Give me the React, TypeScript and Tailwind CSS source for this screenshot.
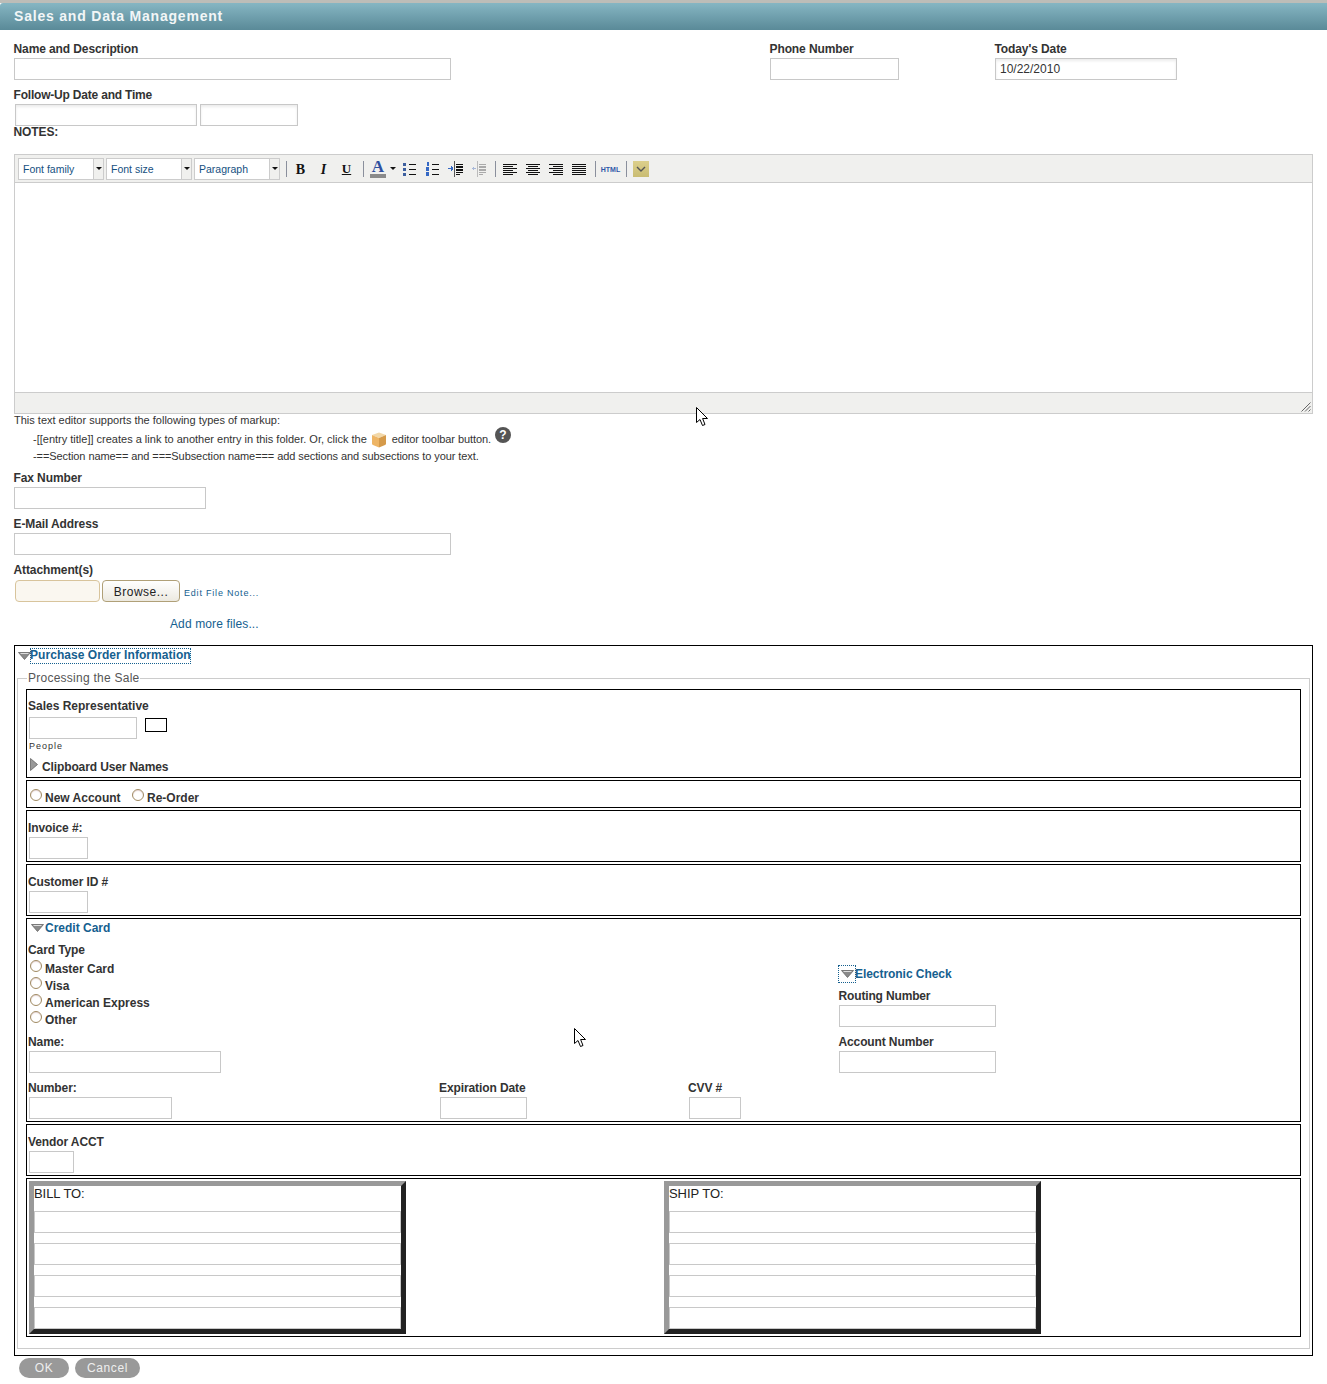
import React from "react";

const Label = ({ children, className = "" }: { children: React.ReactNode; className?: string }) => (
  <div className={`h-[16px] leading-[16px] text-[12px] font-bold text-[#333] whitespace-nowrap tracking-[-0.1px] ${className}`}>{children}</div>
);

const Input = ({ className = "", value }: { className?: string; value?: string }) => (
  <input
    readOnly
    value={value ?? ""}
    className={`block h-[22px] border border-[#c8c8c8] bg-white px-[4px] text-[12px] text-[#333] outline-none ${className}`}
  />
);

const Box = ({ children, className = "" }: { children: React.ReactNode; className?: string }) => (
  <div className={`border border-black pl-[1px] ${className}`}>{children}</div>
);

const Radio = ({ label, className = "" }: { label: string; className?: string }) => (
  <div className={`flex items-start h-[17px] ${className}`}>
    <span className="block ml-[2px] -mt-[1px] w-[12px] h-[12px] rounded-full border border-[#a08a62] bg-white shadow-[inset_0_1px_1px_rgba(180,130,130,0.35)] shrink-0" />
    <span className="ml-[3px] leading-[16px] text-[12px] font-bold text-[#333] whitespace-nowrap">{label}</span>
  </div>
);

const Down = ({ className = "" }: { className?: string }) => (
  <svg width="13" height="8" viewBox="0 0 13 8" className={`block shrink-0 ${className}`}>
    <path d="M0.5 0.5H12.5L6.5 7.5Z" fill="#8a8a8a" stroke="#666" strokeWidth="0.8" />
    <path d="M2.5 1.5H10.5" stroke="#ddd" strokeWidth="1" />
  </svg>
);

type R = [number, number, number, number?, string?];
const Bars = ({ rects }: { rects: R[] }) => (
  <svg width="16" height="16" viewBox="0 0 16 16" className="block">
    {rects.map((r, i) => (
      <rect key={i} x={r[0]} y={r[1]} width={r[2]} height={r[3] ?? 1} fill={r[4] ?? "#111"} />
    ))}
  </svg>
);

const Btn = ({ children, className = "" }: { children: React.ReactNode; className?: string }) => (
  <div className={`w-[23px] h-[20px] flex items-center justify-center shrink-0 ${className}`}>{children}</div>
);

const Sep = ({ className = "" }: { className?: string }) => (
  <div className={`w-[1px] h-[16px] bg-[#8a8f9c] shrink-0 ${className}`} />
);

const Select = ({ label }: { label: string }) => (
  <div className="w-[86px] h-[22px] flex border border-[#ccc] shrink-0 mr-[2px]">
    <div className="w-[75px] bg-white border-r border-[#ccc] pl-[4px] leading-[20px] text-[10.5px] text-[#15507f] whitespace-nowrap">{label}</div>
    <div className="flex-1 bg-[#f0f0ee] flex items-center justify-center">
      <div className="w-0 h-0 border-l-[3px] border-r-[3px] border-t-[3px] border-l-transparent border-r-transparent border-t-[#111]" />
    </div>
  </div>
);

const Cursor = ({ className = "" }: { className?: string }) => (
  <svg width="13" height="20" viewBox="0 0 13 20" className={`absolute ${className}`}>
    <path d="M0.5 0.5V15.5L4 12.5L6.5 18.5L9 17.5L6.6 11.5H11.5Z" fill="#fff" stroke="#000" strokeWidth="1" />
  </svg>
);

const align = {
  left: [[1, 3, 14], [1, 5, 10], [1, 7, 14], [1, 9, 10], [1, 11, 14], [1, 13, 10]] as R[],
  center: [[1, 3, 14], [3, 5, 10], [1, 7, 14], [3, 9, 10], [1, 11, 14], [3, 13, 10]] as R[],
  right: [[1, 3, 14], [5, 5, 10], [1, 7, 14], [5, 9, 10], [1, 11, 14], [5, 13, 10]] as R[],
  full: [[1, 3, 14], [1, 5, 14], [1, 7, 14], [1, 9, 14], [1, 11, 14], [1, 13, 14]] as R[],
};

const Address = ({ title }: { title: string }) => (
  <div className="w-[377px] h-[153px] border-[5px] border-t-[#999] border-l-[#999] border-r-[#222] border-b-[#222]">
    <div className="h-[25px] leading-[15px] text-[13px] tracking-[-0.05px] text-[#222]">{title}</div>
    <Input className="w-full" />
    <Input className="w-full mt-[10px]" />
    <Input className="w-full mt-[10px]" />
    <Input className="w-full mt-[10px]" />
  </div>
);

export default function App() {
  return (
    <div className="relative w-[1327px] h-[1384px] bg-white overflow-hidden font-['Liberation_Sans',Arial,sans-serif]">
      <div className="h-[3px] bg-[#bdbdb8]" />
      <div className="h-[27px] rounded-tl-[3px] bg-gradient-to-b from-[#86b6c3] to-[#5a8a98] pl-[14px] leading-[26px] text-[14px] font-bold tracking-[0.8px] text-[#f2f6f7]">
        Sales and Data Management
      </div>

      <div className="pl-[14px] w-[1313px]">
        <div className="flex pt-[11px]">
          <div className="w-[756px]">
            <Label className="-ml-[0.5px]">Name and Description</Label>
            <Input className="w-[437px] mt-[1px]" />
          </div>
          <div className="w-[225px]">
            <Label className="-ml-[0.5px]">Phone Number</Label>
            <Input className="w-[129px] mt-[1px]" />
          </div>
          <div>
            <Label className="-ml-[0.5px]">Today's Date</Label>
            <Input className="w-[182px] mt-[1px] shadow-[inset_0_2px_3px_rgba(0,0,0,0.08)] border-[#bbb]" value="10/22/2010" />
          </div>
        </div>

        <Label className="-ml-[0.5px] mt-[7px] tracking-[-0.2px]">Follow-Up Date and Time</Label>
        <div className="flex gap-[3px] mt-[1px] ml-[1px]">
          <Input className="w-[182px] border-[#bbb] shadow-[inset_0_2px_3px_rgba(0,0,0,0.08)]" />
          <Input className="w-[98px] border-[#bbb] shadow-[inset_0_2px_3px_rgba(0,0,0,0.08)]" />
        </div>
        <Label className="-ml-[0.5px] -mt-[2px]">NOTES:</Label>

        {/* editor */}
        <div className="mt-[14px] h-[260px] border border-[#ccc] flex flex-col">
          <div className="h-[28px] bg-[#f0f0ee] border-b border-[#ccc] flex items-center pl-[3px] shrink-0">
            <Select label="Font family" />
            <Select label="Font size" />
            <Select label="Paragraph" />
            <Sep className="ml-[4px]" />
            <Btn className="ml-[2px] pt-[2px] font-['Liberation_Serif',serif] font-bold text-[14px] text-[#111]">B</Btn>
            <Btn className="pt-[2px] font-['Liberation_Serif',serif] font-bold italic text-[14px] text-[#111]">I</Btn>
            <Btn className="pt-[1px] font-['Liberation_Serif',serif] font-bold underline text-[13px] text-[#111]">U</Btn>
            <Sep className="ml-[5px]" />
            <div className="ml-[3px] w-[22px] h-[20px] relative shrink-0 flex flex-col items-center">
              <span className="leading-[15px] text-[17px] font-bold font-['Liberation_Serif',serif] text-[#2f4f9f]">A</span>
              <span className="block w-[16px] h-[4px] bg-[#8a8a8a]" />
            </div>
            <div className="w-[8px] flex justify-center shrink-0">
              <div className="w-0 h-0 border-l-[3px] border-r-[3px] border-t-[3px] border-l-transparent border-r-transparent border-t-[#111]" />
            </div>
            <Btn className="ml-[1px]">
              <Bars rects={[[1, 2, 3, 3, "#3d5f9f"], [7, 3, 7], [1, 7, 3, 3, "#3d5f9f"], [7, 8, 7], [1, 12, 3, 3, "#3d5f9f"], [7, 13, 7]]} />
            </Btn>
            <Btn>
              <Bars rects={[[2, 1, 2, 4, "#3568c4"], [7, 3, 7], [1, 6, 3, 4, "#3568c4"], [7, 8, 7], [1, 11, 3, 4, "#3568c4"], [7, 13, 7]]} />
            </Btn>
            <Btn>
              <Bars rects={[[6, 0, 1, 16, "#555"], [8, 3, 7, 1], [8, 5, 7, 2], [8, 8, 7, 2], [8, 11, 7, 1], [0, 7, 3, 1, "#3568c4"], [3, 5, 1, 5, "#3568c4"], [4, 6, 1, 3, "#3568c4"], [8, 13, 4, 1]]} />
            </Btn>
            <Btn>
              <Bars rects={[[6, 0, 1, 16, "#bbb"], [8, 3, 7, 1, "#aaa"], [8, 5, 7, 2, "#aaa"], [8, 8, 7, 2, "#aaa"], [8, 11, 7, 1, "#aaa"], [1, 7, 4, 1, "#a8b8d8"], [2, 6, 1, 3, "#a8b8d8"], [8, 13, 4, 1, "#aaa"]]} />
            </Btn>
            <Sep className="ml-[5px]" />
            <Btn className="ml-[2px]"><Bars rects={align.left} /></Btn>
            <Btn><Bars rects={align.center} /></Btn>
            <Btn><Bars rects={align.right} /></Btn>
            <Btn><Bars rects={align.full} /></Btn>
            <Sep className="ml-[5px]" />
            <Btn className="ml-[3px] pt-[3px] text-[7px] font-bold text-[#2f57a8]">HTML</Btn>
            <Sep className="ml-[4px]" />
            <div className="ml-[6px] w-[16px] h-[16px] bg-gradient-to-b from-[#dccf8c] to-[#c9bc72] flex items-center justify-center shrink-0">
              <svg width="10" height="6" viewBox="0 0 10 6" className="block">
                <path d="M1 1L5 5L9 1" fill="none" stroke="#555" strokeWidth="1.4" />
              </svg>
            </div>
          </div>
          <div className="flex-1 bg-white" />
          <div className="h-[21px] shrink-0 bg-[#f0f0ee] border-t border-[#ccc] flex justify-end items-end pr-[1px] pb-[1px]">
            <svg width="10" height="10" viewBox="0 0 10 10" className="block">
              <path d="M9.5 0.5L0.5 9.5M9.5 4L4 9.5M9.5 7.5L7.5 9.5" stroke="#666" strokeWidth="1" fill="none" />
            </svg>
          </div>
        </div>

        {/* help */}
        <div className="h-[14px] leading-[13px] text-[11px] text-[#333] whitespace-nowrap">This text editor supports the following types of markup:</div>
        <div className="mt-[1px] pl-[19px] h-[20px] flex items-start text-[11px] text-[#333] whitespace-nowrap">
          <span className="mt-[3px] leading-[14px]">-[[entry title]] creates a link to another entry in this folder. Or, click the</span>
          <svg width="16" height="16" viewBox="0 0 16 16" className="block ml-[4px] mt-[3px] shrink-0">
            <path d="M8 0.5L15 3L8 6L1 3Z" fill="#f2d8a8" />
            <path d="M1 3L8 6V15.5L2 13Q1 12.5 1 11.5Z" fill="#eeb565" />
            <path d="M15 3L8 6V15.5L14 13Q15 12.5 15 11.5Z" fill="#d59a4a" />
          </svg>
          <span className="ml-[5px] mt-[3px] leading-[14px] tracking-[-0.08px]">editor toolbar button.</span>
          <span className="ml-[4px] -mt-[2px] w-[16px] h-[16px] rounded-full bg-[#555] text-white text-[12px] font-bold leading-[16px] text-center shrink-0">?</span>
        </div>
        <div className="pl-[19px] h-[14px] leading-[14px] text-[11px] tracking-[-0.08px] text-[#333] whitespace-nowrap">-==Section name== and ===Subsection name=== add sections and subsections to your text.</div>

        <Label className="-ml-[0.5px] mt-[7px]">Fax Number</Label>
        <Input className="w-[192px] mt-[1px]" />
        <Label className="-ml-[0.5px] mt-[7px]">E-Mail Address</Label>
        <Input className="w-[437px] mt-[1px]" />
        <Label className="-ml-[0.5px] mt-[7px]">Attachment(s)</Label>

        <div className="mt-[2px] ml-[1px] flex items-start h-[22px]">
          <div className="w-[85px] h-[22px] rounded-[4px] border border-[#d8c49c] bg-[#faf7f0]" />
          <button className="ml-[2px] w-[78px] h-[22px] pt-[2px] rounded-[4px] border border-[#b0a078] bg-gradient-to-b from-[#fff] to-[#ece9e0] text-[12px] tracking-[0.5px] text-[#222]">Browse...</button>
          <a className="ml-[4px] mt-[7px] leading-[12px] text-[9px] tracking-[0.8px] text-[#15608f]">Edit File Note...</a>
        </div>
        <div className="mt-[14px] pl-[156px] h-[15px] leading-[16px] text-[12px] tracking-[0.12px] text-[#15608f]">Add more files...</div>

        {/* purchase */}
        <div className="mt-[14px] h-[711px] border border-black">
          <div className="flex items-center h-[17px] mt-[1px] pl-[3px]">
            <Down className="mt-[1px]" />
            <span className="-ml-[1px] outline outline-1 outline-dotted outline-[#15608f] -outline-offset-1 h-[16px] leading-[15px] text-[12px] font-bold tracking-[0.05px] text-[#15608f] whitespace-nowrap">Purchase Order Information</span>
          </div>
          <fieldset className="mx-[2px] mt-[6px] px-[8px] pb-[11px] border border-[#ccc]">
            <legend className="ml-[1px] px-[1px] h-[16px] leading-[16px] text-[12px] tracking-[0.25px] text-[#555]">Processing the Sale</legend>
            <div className="flex flex-col gap-[2px] pt-[3px]">
              <Box className="h-[89px] pt-[8px]">
                <Label className="tracking-[0px]">Sales Representative</Label>
                <div className="flex mt-[3px]">
                  <Input className="w-[108px] ml-[1px]" />
                  <div className="ml-[8px] mt-[1px] w-[22px] h-[14px] border border-black" />
                </div>
                <div className="mt-[2px] ml-[1px] h-[10px] leading-[10px] text-[9px] tracking-[1px] text-[#333]">People</div>
                <div className="flex mt-[8px] ml-[2px] h-[16px]">
                  <svg width="8" height="13" viewBox="0 0 8 13" className="block -mt-[1px]">
                    <path d="M0.5 0.5L7.5 6.5L0.5 12.5Z" fill="#999" stroke="#666" strokeWidth="0.8" />
                  </svg>
                  <span className="ml-[4px] leading-[16px] text-[12px] font-bold tracking-[-0.12px] text-[#333] whitespace-nowrap">Clipboard User Names</span>
                </div>
              </Box>

              <Box className="h-[28px] pt-[9px] flex">
                <Radio label="New Account" className="w-[102px]" />
                <Radio label="Re-Order" />
              </Box>

              <Box className="h-[52px] pt-[9px]">
                <Label>Invoice #:</Label>
                <Input className="w-[59px] ml-[1px] mt-[1px]" />
              </Box>
              <Box className="h-[52px] pt-[9px]">
                <Label>Customer ID #</Label>
                <Input className="w-[59px] ml-[1px] mt-[1px]" />
              </Box>

              <Box className="h-[204px] flex">
                <div className="w-[810px] pt-[1px] shrink-0">
                  <div className="flex items-center h-[16px] pl-[3px]">
                    <Down className="mr-[1px]" />
                    <span className="text-[12px] font-bold text-[#15608f] whitespace-nowrap">Credit Card</span>
                  </div>
                  <Label className="mt-[6px]">Card Type</Label>
                  <div className="mt-[3px]">
                    <Radio label="Master Card" />
                    <Radio label="Visa" />
                    <Radio label="American Express" />
                    <Radio label="Other" />
                  </div>
                  <Label className="mt-[5px]">Name:</Label>
                  <Input className="w-[192px] ml-[1px] mt-[1px]" />
                  <div className="flex mt-[7px]">
                    <div className="w-[411px]">
                      <Label>Number:</Label>
                      <Input className="w-[143px] ml-[1px] mt-[1px]" />
                    </div>
                    <div className="w-[249px]">
                      <Label>Expiration Date</Label>
                      <Input className="w-[87px] ml-[1px] mt-[1px]" />
                    </div>
                    <div>
                      <Label>CVV #</Label>
                      <Input className="w-[52px] ml-[1px] mt-[1px]" />
                    </div>
                  </div>
                </div>
                <div className="pt-[46px]">
                  <div className="flex items-center h-[18px]">
                    <span className="w-[18px] h-[18px] outline outline-1 outline-dotted outline-[#15608f] -outline-offset-1 flex items-center justify-center shrink-0">
                      <Down />
                    </span>
                    <span className="-ml-[1px] text-[12px] font-bold tracking-[-0.05px] text-[#15608f] whitespace-nowrap">Electronic Check</span>
                  </div>
                  <Label className="mt-[5px] ml-[0.5px] tracking-[-0.15px]">Routing Number</Label>
                  <Input className="w-[157px] ml-[1px] mt-[1px]" />
                  <Label className="mt-[7px] ml-[0.5px] tracking-[-0.12px]">Account Number</Label>
                  <Input className="w-[157px] ml-[1px] mt-[1px]" />
                </div>
              </Box>

              <Box className="h-[52px] pt-[9px]">
                <Label>Vendor ACCT</Label>
                <Input className="w-[45px] ml-[1px] mt-[1px]" />
              </Box>

              <Box className="h-[159px] pt-[2px] pl-[2px] flex gap-[258px]">
                <Address title="BILL TO:" />
                <Address title="SHIP TO:" />
              </Box>
            </div>
          </fieldset>
        </div>
      </div>

      <div className="flex gap-[6px] pl-[19px] mt-[2px]">
        <button className="w-[50px] h-[20px] rounded-full bg-[#999] text-[12px] tracking-[0.6px] text-[#eee]">OK</button>
        <button className="w-[65px] h-[20px] rounded-full bg-[#999] text-[12px] tracking-[0.6px] text-[#eee]">Cancel</button>
      </div>

      <Cursor className="left-[696px] top-[407px]" />
      <Cursor className="left-[574px] top-[1028px]" />
    </div>
  );
}
